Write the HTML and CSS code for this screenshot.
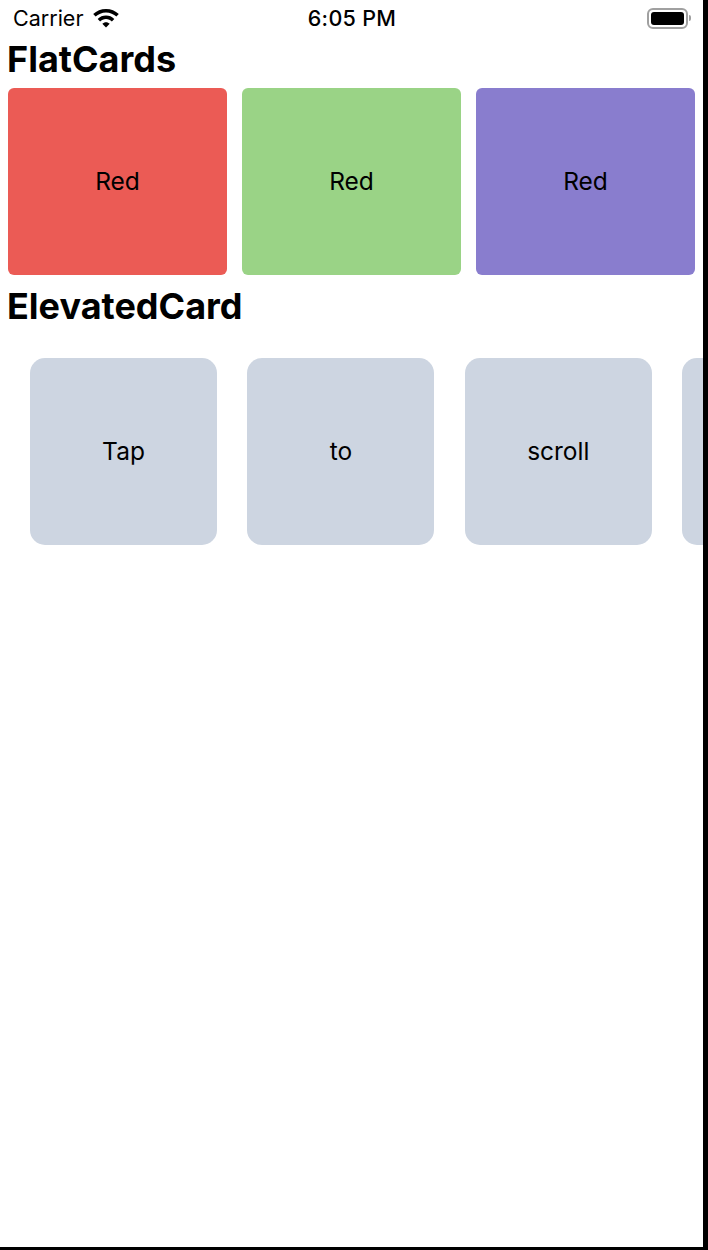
FILE: index.html
```html
<!DOCTYPE html>
<html>
<head>
<meta charset="utf-8">
<link rel="stylesheet" href="styles.css">
</head>
<body>
<div class="screen">
  <div class="status">
    <div class="status-left">
      <span class="carrier">Carrier</span>
      <svg class="wifi" width="28" height="21" viewBox="0 0 28 21">
        <path d="M14 2C9 2 4.6 3.9 1.2 7.1L3.6 9.6C6.3 7 10 5.4 14 5.4S21.7 7 24.4 9.6L26.8 7.1C23.4 3.9 19 2 14 2Z" fill="#000"/>
        <path d="M14 8.6C10.8 8.6 7.9 9.8 5.7 11.9L8.1 14.4C9.6 12.9 11.7 12 14 12S18.4 12.9 19.9 14.4L22.3 11.9C20.1 9.8 17.2 8.6 14 8.6Z" fill="#000"/>
        <path d="M14 15.2C12.6 15.2 11.3 15.8 10.3 16.7L14 20.5L17.7 16.7C16.7 15.8 15.4 15.2 14 15.2Z" fill="#000"/>
      </svg>
    </div>
    <div class="time">6:05 PM</div>
    <div class="status-right">
      <div class="battery"><div class="battery-fill"></div></div>
      <div class="battery-cap"></div>
    </div>
  </div>

  <h1 class="heading">FlatCards</h1>
  <div class="flat-row">
    <div class="flat-card card-red">Red</div>
    <div class="flat-card card-green">Red</div>
    <div class="flat-card card-purple">Red</div>
  </div>

  <h1 class="heading heading-elevated">ElevatedCard</h1>
  <div class="elevated-row">
    <div class="elevated-card">Tap</div>
    <div class="elevated-card">to</div>
    <div class="elevated-card">scroll</div>
    <div class="elevated-card"></div>
    <div class="elevated-card"></div>
  </div>
</div>
</body>
</html>
```

FILE: styles.css
```css
html, body {
  margin: 0;
  padding: 0;
  background: #000;
}
body {
  width: 708px;
  height: 1250px;
  overflow: hidden;
  font-family: Inter, "Liberation Sans", sans-serif;
  color: #000;
}
.screen {
  width: 703px;
  height: 1247px;
  background: #fff;
  overflow: hidden;
}
.status {
  height: 36px;
  display: flex;
  align-items: center;
  justify-content: space-between;
  padding: 0 12px 0 13px;
}
.status-left {
  display: flex;
  align-items: center;
  gap: 9px;
  width: 200px;
}
.carrier {
  font-size: 21.5px;
}
.wifi {
  display: block;
  margin-top: -1px;
}
.time {
  font-size: 21.5px;
  font-weight: 500;
  letter-spacing: 0.3px;
}
.status-right {
  width: 200px;
  display: flex;
  align-items: center;
  justify-content: flex-end;
  gap: 1px;
}
.battery {
  width: 33px;
  height: 13px;
  border: 2px solid #a0a0a0;
  border-radius: 6px;
  padding: 2px;
  box-sizing: content-box;
}
.battery-fill {
  width: 100%;
  height: 100%;
  background: #000;
  border-radius: 3px;
}
.battery-cap {
  width: 2px;
  height: 6px;
  background: #a0a0a0;
  border-radius: 0 2px 2px 0;
}
.heading {
  margin: 0;
  padding: 0 7px;
  font-size: 36px;
  font-weight: 700;
  line-height: 46px;
}
.flat-row {
  display: flex;
  gap: 15px;
  padding: 6px 8px 0 8px;
}
.flat-card {
  flex: 1;
  height: 187px;
  border-radius: 6px;
  display: flex;
  align-items: center;
  justify-content: center;
  font-size: 24.5px;
  padding-bottom: 2px;
  box-sizing: border-box;
}
.card-red { background: #eb5b55; }
.card-green { background: #9ad386; }
.card-purple { background: #897dce; }
.heading-elevated {
  margin-top: 8px;
}
.elevated-row {
  display: flex;
  gap: 30.4px;
  padding: 29px 30px;
}
.elevated-card {
  flex: 0 0 187px;
  height: 187px;
  border-radius: 15px;
  background: #cdd5e1;
  display: flex;
  align-items: center;
  justify-content: center;
  font-size: 24.5px;
  padding-bottom: 2px;
  box-sizing: border-box;
}
```
